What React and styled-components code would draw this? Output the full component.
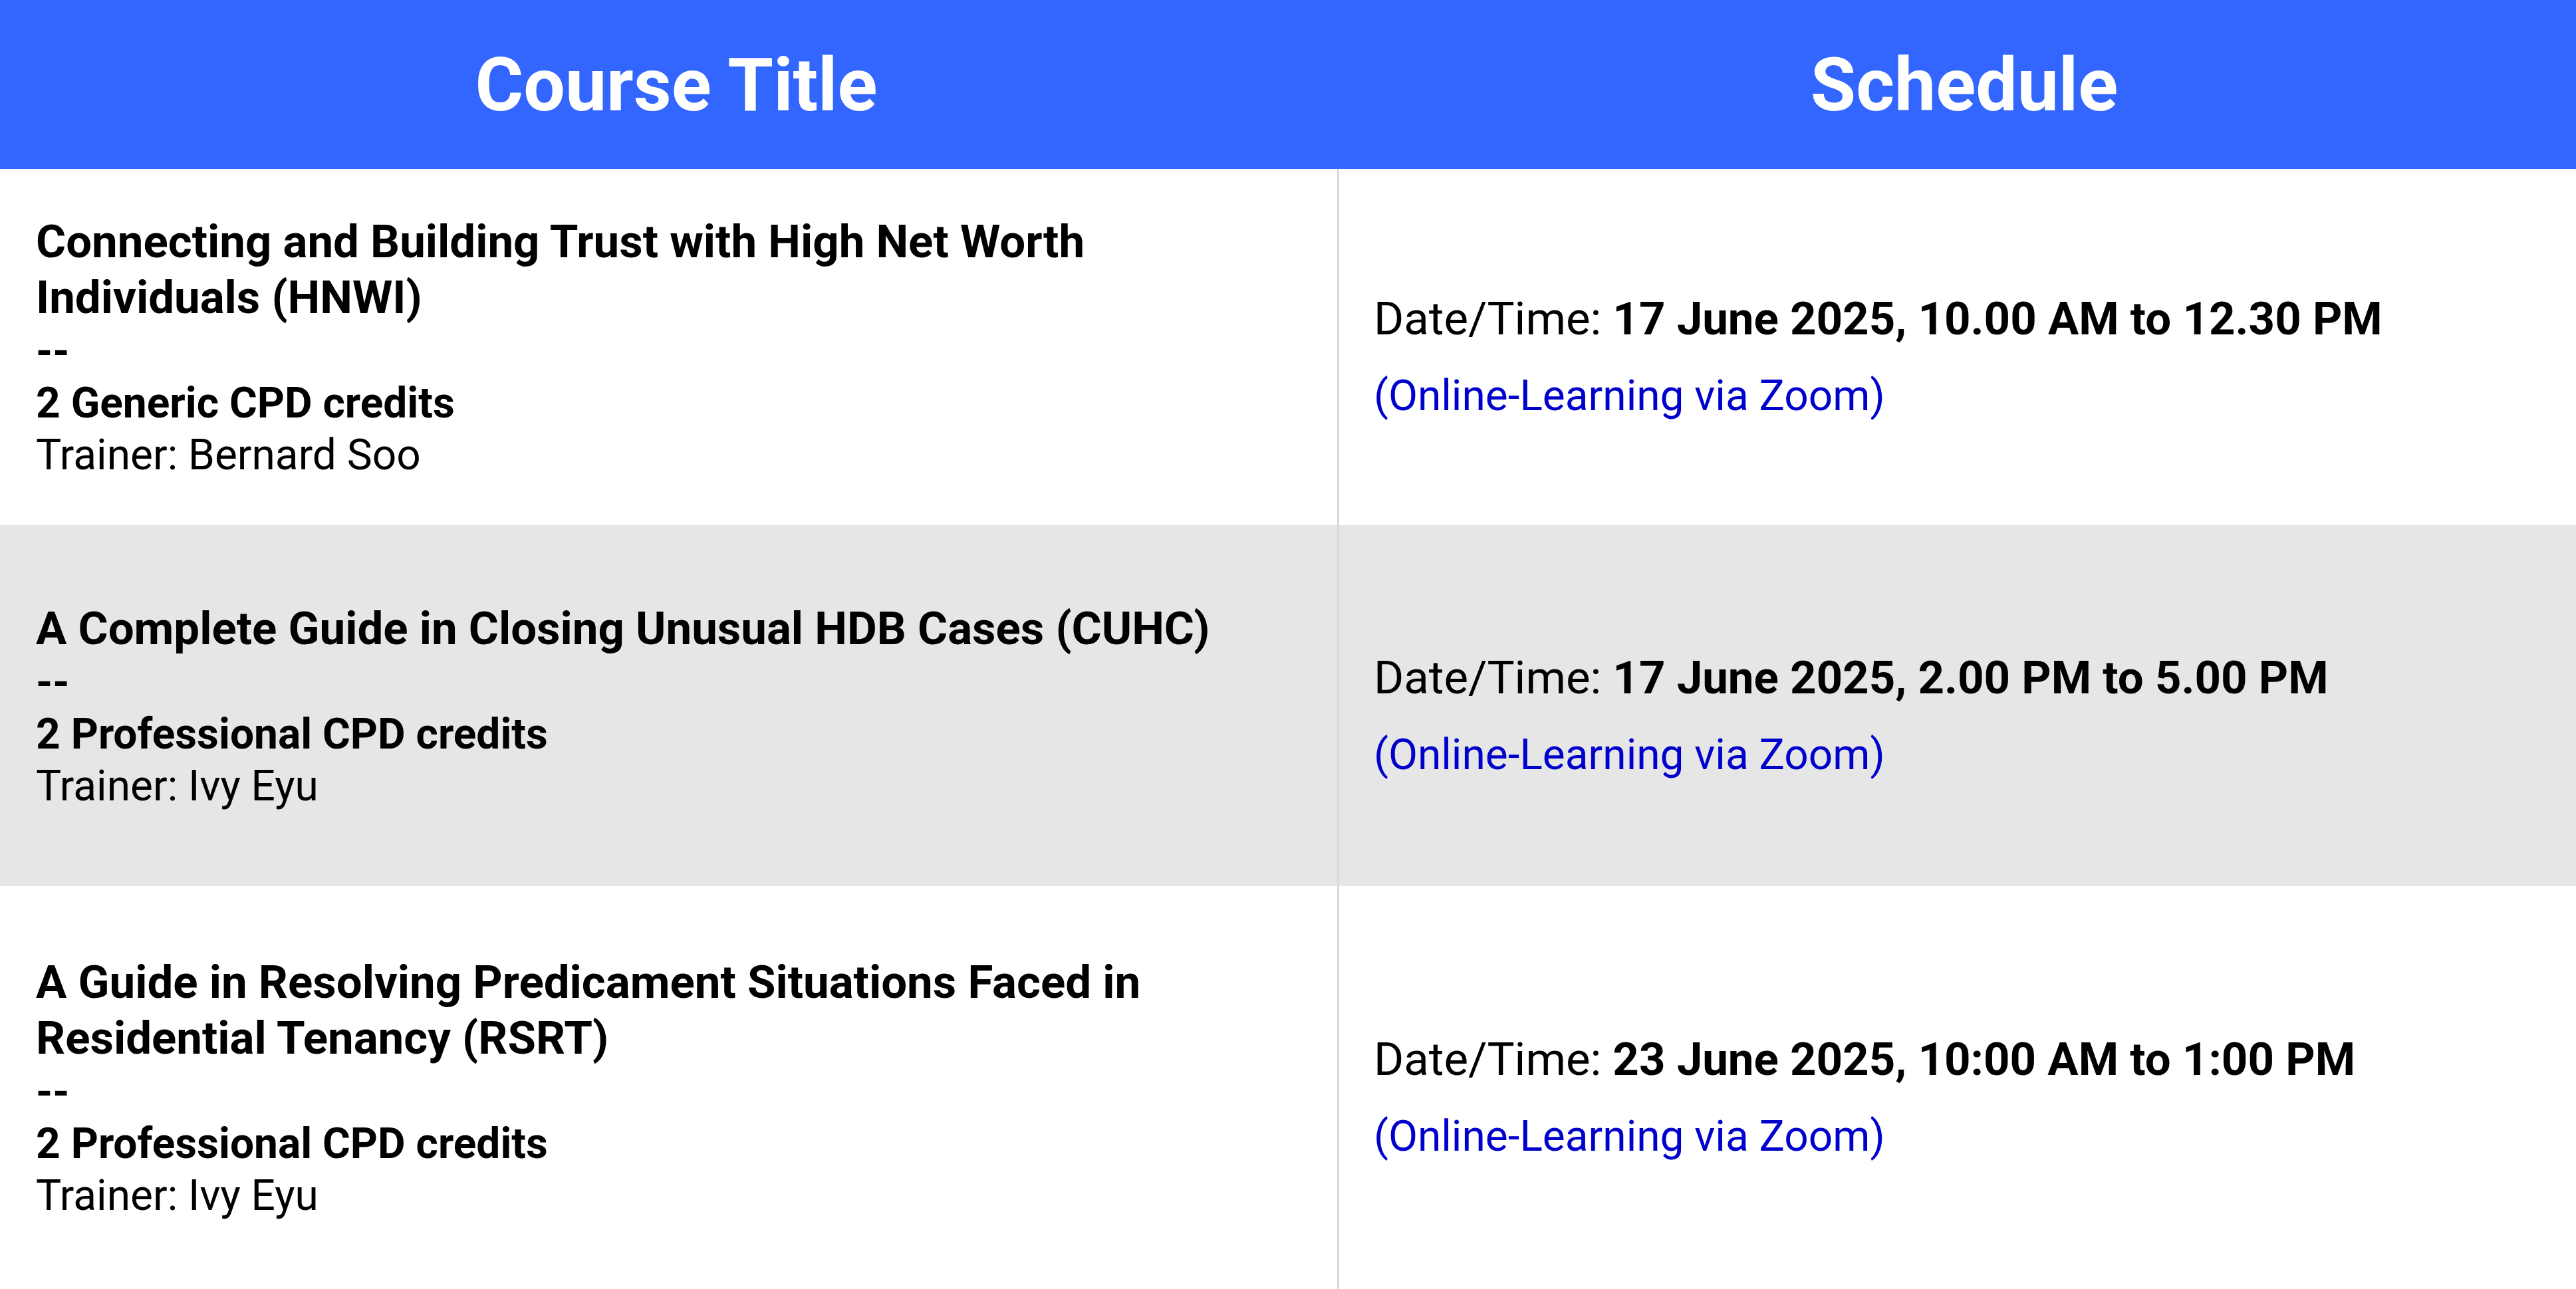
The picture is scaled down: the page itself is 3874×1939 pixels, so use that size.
import React from 'react'
import styled, { createGlobalStyle } from 'styled-components';

const courses = [
    {
        title: 'Connecting and Building Trust with High Net Worth Individuals (HNWI)',
        credits: '2 Generic CPD credits',
        trainer: 'Bernard Soo',
        date: '17 June 2025, 10.00 AM to 12.30 PM',
        height: 536,
    },
    {
        title: 'A Complete Guide in Closing Unusual HDB Cases (CUHC)',
        credits: '2 Professional CPD credits',
        trainer: 'Ivy Eyu',
        date: '17 June 2025, 2.00 PM to 5.00 PM',
        height: 543,
        shaded: true,
    },
    {
        title: 'A Guide in Resolving Predicament Situations Faced in Residential Tenancy (RSRT)',
        credits: '2 Professional CPD credits',
        trainer: 'Ivy Eyu',
        date: '23 June 2025, 10:00 AM to 1:00 PM',
        height: 606,
    },
];

const App = () => {
    return (
        <>
            <GlobalStyle />
            <Table>
                <HeadRow>
                    <HeadCell>Course Title</HeadCell>
                    <HeadCell>Schedule</HeadCell>
                </HeadRow>
                {courses.map((c) => (
                    <Row key={c.title} $shaded={c.shaded} $height={c.height}>
                        <CourseCell>
                            <Title>{c.title}</Title>
                            <Bold>--</Bold>
                            <Bold>{c.credits}</Bold>
                            <Plain>Trainer: {c.trainer}</Plain>
                        </CourseCell>
                        <ScheduleCell>
                            <DateLine>
                                Date/Time: <strong>{c.date}</strong>
                            </DateLine>
                            <Venue>(Online-Learning via Zoom)</Venue>
                        </ScheduleCell>
                    </Row>
                ))}
            </Table>
        </>
    )
}

export default App;

const GlobalStyle = createGlobalStyle`
    body {
        margin: 0;
        background: #fff;
        font-family: Roboto, "Liberation Sans", Arial, sans-serif;
        color: #000;
    }
`;

const Table = styled.div`
    width: 3874px;
    min-height: 1939px;
    display: flex;
    flex-direction: column;
`;

const HeadRow = styled.div`
    display: grid;
    grid-template-columns: 2014px 1fr;
    height: 254px;
    background-color: #3366ff;
`;

const HeadCell = styled.div`
    display: flex;
    align-items: center;
    justify-content: center;
    color: #fff;
    font-size: 111px;
    font-weight: 700;
    padding: 2px 0 0 20px;
`;

const Row = styled.div`
    display: grid;
    grid-template-columns: 2014px 1fr;
    height: ${p => p.$height}px;
    background-color: ${p => (p.$shaded ? '#e6e6e6' : '#fff')};
`;

const CourseCell = styled.div`
    display: flex;
    flex-direction: column;
    justify-content: center;
    padding: 2px 40px 0 54px;
    border-right: 3px solid #d9d9d9;
    font-size: 64px;
    line-height: 78px;
`;

const Title = styled.div`
    font-size: 69px;
    font-weight: 700;
    line-height: 84px;
`;

const Bold = styled.div`
    font-weight: 700;
`;

const Plain = styled.div`
    font-weight: 400;
`;

const ScheduleCell = styled.div`
    display: flex;
    flex-direction: column;
    justify-content: center;
    padding: 30px 40px 0 52px;
    font-size: 64px;
    line-height: 78px;
`;

const DateLine = styled.div`
    font-size: 69px;
    line-height: 82px;
    margin-bottom: 36px;

    strong {
        font-weight: 700;
    }
`;

const Venue = styled.div`
    color: #0000cc;
`;
